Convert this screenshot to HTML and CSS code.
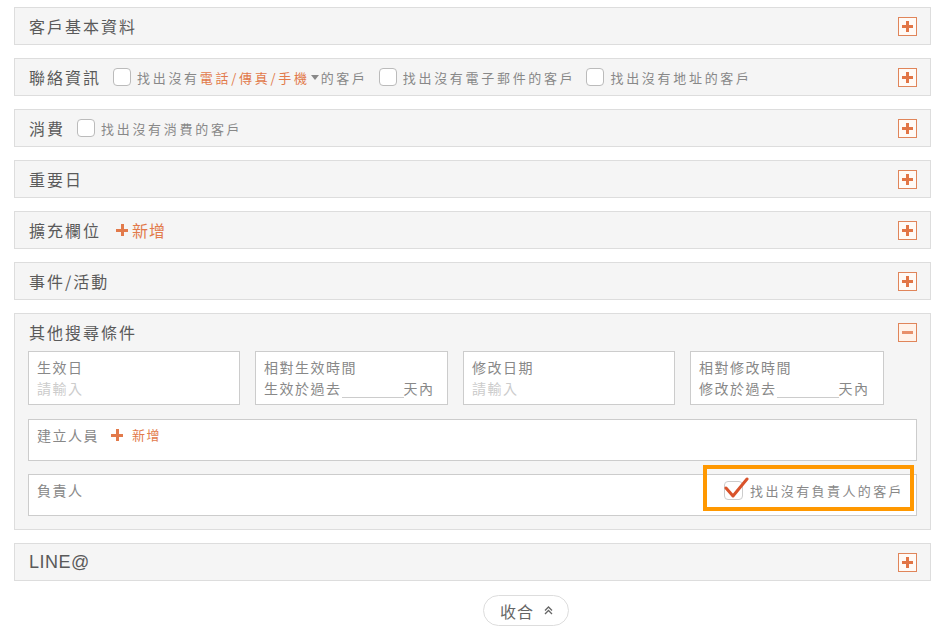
FILE: index.html
```html
<!DOCTYPE html>
<html lang="zh-Hant">
  <head>
    <meta charset="UTF-8" />
    <meta name="viewport" content="width=device-width, initial-scale=1.0" />
    <title>搜尋條件</title>
    <link rel="stylesheet" href="styles.css">
  </head>

  <body>
    <div class="filters">
      <div class="panel">
        <div class="panel-head">
          <span class="panel-title">客戶基本資料</span>
          <span class="toggle plus"></span>
        </div>
      </div>

      <div class="panel">
        <div class="panel-head">
          <span class="panel-title">聯絡資訊</span>
          <label class="check"><span class="box"></span>找出沒有<span class="accent">電話/傳真/手機</span><span class="caret"></span>的客戶</label>
          <label class="check"><span class="box"></span>找出沒有電子郵件的客戶</label>
          <label class="check"><span class="box"></span>找出沒有地址的客戶</label>
          <span class="toggle plus"></span>
        </div>
      </div>

      <div class="panel">
        <div class="panel-head">
          <span class="panel-title">消費</span>
          <label class="check"><span class="box"></span>找出沒有消費的客戶</label>
          <span class="toggle plus"></span>
        </div>
      </div>

      <div class="panel">
        <div class="panel-head">
          <span class="panel-title">重要日</span>
          <span class="toggle plus"></span>
        </div>
      </div>

      <div class="panel">
        <div class="panel-head">
          <span class="panel-title">擴充欄位</span>
          <span class="add add-lg"><span class="add-icon"></span>新增</span>
          <span class="toggle plus"></span>
        </div>
      </div>

      <div class="panel">
        <div class="panel-head">
          <span class="panel-title">事件/活動</span>
          <span class="toggle plus"></span>
        </div>
      </div>

      <div class="panel">
        <div class="panel-head">
          <span class="panel-title">其他搜尋條件</span>
          <span class="toggle minus"></span>
        </div>
        <div class="panel-body">
          <div class="field-row">
            <div class="field">
              <div class="field-label">生效日</div>
              <div class="placeholder">請輸入</div>
            </div>
            <div class="field">
              <div class="field-label">相對生效時間</div>
              <div class="field-line">生效於過去<span class="blank"></span>天內</div>
            </div>
            <div class="field">
              <div class="field-label">修改日期</div>
              <div class="placeholder">請輸入</div>
            </div>
            <div class="field">
              <div class="field-label">相對修改時間</div>
              <div class="field-line">修改於過去<span class="blank"></span>天內</div>
            </div>
          </div>

          <div class="field wide">
            <div class="field-label">建立人員 <span class="add"><span class="add-icon"></span>新增</span></div>
          </div>

          <div class="field wide owner">
            <div class="field-label">負責人</div>
            <label class="check checked">
              <span class="box">
                <svg class="tick" width="26" height="24" viewBox="0 0 26 24">
                  <path d="M2 12 L9 20 L23 3" fill="none" stroke="#d9532b" stroke-width="3" stroke-linecap="round" stroke-linejoin="round"/>
                </svg>
              </span>找出沒有負責人的客戶
            </label>
            <span class="highlight"></span>
          </div>
        </div>
      </div>

      <div class="panel">
        <div class="panel-head">
          <span class="panel-title line">LINE@</span>
          <span class="toggle plus"></span>
        </div>
      </div>

      <div class="collapse">
        <button class="collapse-btn">收合
          <svg width="9" height="9" viewBox="0 0 9 9">
            <path d="M1 4.5 L4.5 1 L8 4.5 M1 8 L4.5 4.5 L8 8" fill="none" stroke="#666" stroke-width="1.3"/>
          </svg>
        </button>
      </div>
    </div>
  </body>
</html>
```

FILE: styles.css
```css
*,
*::before,
*::after {
  box-sizing: border-box;
}

body {
  margin: 0;
  background-color: #fff;
  font-family: "Noto Sans CJK TC", "Noto Sans", sans-serif;
  color: #555;
}

.filters {
  padding: 7px 14px 0;
}

.panel {
  background-color: #f5f5f5;
  border: 1px solid #ddd;
  margin-bottom: 13px;
}

.panel-head {
  height: 36px;
  display: flex;
  align-items: center;
  padding: 0 13px 0 14px;
}

.panel-title {
  font-size: 16px;
  letter-spacing: 2px;
  color: #5a5a5a;
  margin-right: 12px;
}

.panel-title.line {
  font-family: "Liberation Sans", sans-serif;
  font-size: 18px;
  letter-spacing: 0.5px;
}

.check {
  display: flex;
  align-items: center;
  font-size: 13px;
  letter-spacing: 2.7px;
  color: #888;
  margin-right: 11px;
}

.check .box {
  width: 18px;
  height: 18px;
  border: 1px solid #bbb;
  border-radius: 4px;
  background-color: #fff;
  margin-right: 6px;
  position: relative;
}

.accent {
  color: #e27a4b;
}

.caret {
  display: inline-block;
  width: 0;
  height: 0;
  border-left: 4px solid transparent;
  border-right: 4px solid transparent;
  border-top: 5px solid #888;
  margin: 0 2px 0 1px;
}

.add {
  display: inline-flex;
  align-items: center;
  font-size: 13px;
  color: #e27a4b;
  letter-spacing: 1.5px;
  margin-left: 12px;
}

.add .add-icon {
  margin-right: 9px;
}

.add-lg {
  font-size: 16px;
  letter-spacing: 1px;
  margin-left: 3px;
}

.add-lg .add-icon {
  margin-right: 4px;
}

.add-icon {
  width: 12px;
  height: 12px;
  background:
    linear-gradient(#e27a4b, #e27a4b) center / 12px 3px no-repeat,
    linear-gradient(#e27a4b, #e27a4b) center / 3px 12px no-repeat;
}

.toggle {
  width: 19px;
  height: 19px;
  margin-left: auto;
  border: 1px solid #e0855a;
  background-color: #fffaf6;
}

.toggle.plus {
  background:
    linear-gradient(#e27545, #e27545) center / 11px 3px no-repeat,
    linear-gradient(#e27545, #e27545) center / 3px 11px no-repeat,
    #fffaf6;
}

.toggle.minus {
  background:
    linear-gradient(#e8906a, #e8906a) center / 11px 3px no-repeat,
    #fff3ea;
}

.panel-body {
  padding: 1px 13px 13px;
}

.field-row {
  display: grid;
  grid-template-columns: 212px 193px 212px 194px;
  column-gap: 15px;
  margin-bottom: 14px;
}

.field {
  background-color: #fff;
  border: 1px solid #ccc;
  padding: 5px 8px;
  font-size: 14px;
  letter-spacing: 1.5px;
  color: #888;
}

.field-label {
  line-height: 20px;
  display: flex;
  align-items: center;
}

.field-line,
.placeholder {
  line-height: 22px;
}

.placeholder {
  color: #ccc;
}

.blank {
  display: inline-block;
  width: 62px;
  height: 16px;
  border-bottom: 1px solid #ccc;
  vertical-align: -4px;
}

.field.wide {
  height: 42px;
  margin-bottom: 13px;
}

.field.owner {
  margin-bottom: 0;
  display: flex;
  align-items: flex-start;
  justify-content: space-between;
  position: relative;
}

.owner .check {
  margin: 1px 4px 0 0;
  letter-spacing: 2.4px;
}

.check.checked .box {
  width: 19px;
  height: 19px;
  border-color: #ccc;
  margin-right: 7px;
}

.tick {
  position: absolute;
  left: -1px;
  top: -6px;
}

.highlight {
  position: absolute;
  top: -10px;
  right: 2px;
  width: 211px;
  height: 46px;
  border: 4px solid #ff9800;
  pointer-events: none;
}

.collapse {
  display: flex;
  justify-content: center;
  padding-top: 1px;
}

.collapse-btn {
  display: flex;
  align-items: center;
  gap: 10px;
  height: 31px;
  padding: 0 15px 0 16px;
  margin-left: 107px;
  border: 1px solid #ddd;
  border-radius: 16px;
  background-color: #fff;
  font-family: "Noto Sans CJK TC", sans-serif;
  font-size: 16px;
  color: #666;
  letter-spacing: 1px;
}
```
